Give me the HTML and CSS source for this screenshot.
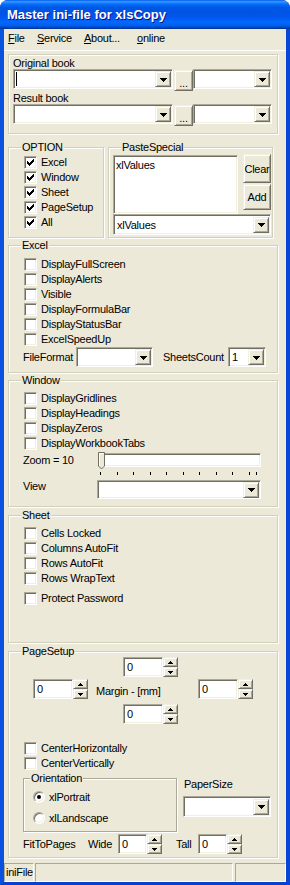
FILE: index.html
```html
<!DOCTYPE html>
<html>
<head>
<meta charset="utf-8">
<title>Master ini-file for xlsCopy</title>
<link rel="stylesheet" href="styles.css">
</head>
<body>
<div class="window">
  <div class="titlebar"><span class="title">Master ini-file for xlsCopy</span></div>
  <div class="frame">
    <div class="menubar">
      <span class="menu-item m-file"><u>F</u>ile</span>
      <span class="menu-item m-service"><u>S</u>ervice</span>
      <span class="menu-item m-about"><u>A</u>bout...</span>
      <span class="menu-item"><u>o</u>nline</span>
    </div>
    <div class="client">
      <div class="group group-books">
        <div class="field-label">Original book</div>
        <div class="book-row">
          <div class="combo combo-path"><span class="caret"></span><span class="drop"><svg width="7" height="4" viewBox="0 0 7 4" shape-rendering="crispEdges"><path d="M0 0h7v1h-7zM1 1h5v1h-5zM2 2h3v1h-3zM3 3h1v1h-1z"/></svg></span></div>
          <button class="btn btn-dots">...</button>
          <div class="combo combo-sheet"><span class="combo-text"></span><span class="drop"><svg width="7" height="4" viewBox="0 0 7 4" shape-rendering="crispEdges"><path d="M0 0h7v1h-7zM1 1h5v1h-5zM2 2h3v1h-3zM3 3h1v1h-1z"/></svg></span></div>
        </div>
        <div class="field-label">Result book</div>
        <div class="book-row">
          <div class="combo combo-path"><span class="combo-text"></span><span class="drop"><svg width="7" height="4" viewBox="0 0 7 4" shape-rendering="crispEdges"><path d="M0 0h7v1h-7zM1 1h5v1h-5zM2 2h3v1h-3zM3 3h1v1h-1z"/></svg></span></div>
          <button class="btn btn-dots">...</button>
          <div class="combo combo-sheet"><span class="combo-text"></span><span class="drop"><svg width="7" height="4" viewBox="0 0 7 4" shape-rendering="crispEdges"><path d="M0 0h7v1h-7zM1 1h5v1h-5zM2 2h3v1h-3zM3 3h1v1h-1z"/></svg></span></div>
        </div>
      </div>

      <div class="opt-row">
        <div class="group group-option">
          <span class="group-label">OPTION</span>
          <div class="chk-row"><span class="check"><svg width="7" height="7" viewBox="0 0 7 7" shape-rendering="crispEdges"><path d="M6 0h1v1h-1zM5 1h2v1h-2zM0 2h1v1h-1zM4 2h3v1h-3zM0 3h2v1h-2zM3 3h3v1h-3zM0 4h5v1h-5zM1 5h3v1h-3zM2 6h1v1h-1z"/></svg></span>Excel</div>
          <div class="chk-row"><span class="check"><svg width="7" height="7" viewBox="0 0 7 7" shape-rendering="crispEdges"><path d="M6 0h1v1h-1zM5 1h2v1h-2zM0 2h1v1h-1zM4 2h3v1h-3zM0 3h2v1h-2zM3 3h3v1h-3zM0 4h5v1h-5zM1 5h3v1h-3zM2 6h1v1h-1z"/></svg></span>Window</div>
          <div class="chk-row"><span class="check"><svg width="7" height="7" viewBox="0 0 7 7" shape-rendering="crispEdges"><path d="M6 0h1v1h-1zM5 1h2v1h-2zM0 2h1v1h-1zM4 2h3v1h-3zM0 3h2v1h-2zM3 3h3v1h-3zM0 4h5v1h-5zM1 5h3v1h-3zM2 6h1v1h-1z"/></svg></span>Sheet</div>
          <div class="chk-row"><span class="check"><svg width="7" height="7" viewBox="0 0 7 7" shape-rendering="crispEdges"><path d="M6 0h1v1h-1zM5 1h2v1h-2zM0 2h1v1h-1zM4 2h3v1h-3zM0 3h2v1h-2zM3 3h3v1h-3zM0 4h5v1h-5zM1 5h3v1h-3zM2 6h1v1h-1z"/></svg></span>PageSetup</div>
          <div class="chk-row"><span class="check"><svg width="7" height="7" viewBox="0 0 7 7" shape-rendering="crispEdges"><path d="M6 0h1v1h-1zM5 1h2v1h-2zM0 2h1v1h-1zM4 2h3v1h-3zM0 3h2v1h-2zM3 3h3v1h-3zM0 4h5v1h-5zM1 5h3v1h-3zM2 6h1v1h-1z"/></svg></span>All</div>
        </div>
        <div class="group group-paste">
          <span class="group-label">PasteSpecial</span>
          <div class="paste-top">
            <div class="listbox">xlValues</div>
            <div class="paste-buttons">
              <button class="btn btn-clear">Clear</button>
              <button class="btn btn-add">Add</button>
            </div>
          </div>
          <div class="combo combo-paste"><span class="combo-text">xlValues</span><span class="drop"><svg width="7" height="4" viewBox="0 0 7 4" shape-rendering="crispEdges"><path d="M0 0h7v1h-7zM1 1h5v1h-5zM2 2h3v1h-3zM3 3h1v1h-1z"/></svg></span></div>
        </div>
      </div>

      <div class="group group-excel">
        <span class="group-label">Excel</span>
        <div class="chk-row"><span class="check"></span>DisplayFullScreen</div>
        <div class="chk-row"><span class="check"></span>DisplayAlerts</div>
        <div class="chk-row"><span class="check"></span>Visible</div>
        <div class="chk-row"><span class="check"></span>DisplayFormulaBar</div>
        <div class="chk-row"><span class="check"></span>DisplayStatusBar</div>
        <div class="chk-row"><span class="check"></span>ExcelSpeedUp</div>
        <div class="ff-row">
          <span class="ff-label">FileFormat</span>
          <div class="combo combo-ff"><span class="combo-text"></span><span class="drop"><svg width="7" height="4" viewBox="0 0 7 4" shape-rendering="crispEdges"><path d="M0 0h7v1h-7zM1 1h5v1h-5zM2 2h3v1h-3zM3 3h1v1h-1z"/></svg></span></div>
          <span class="sc-label">SheetsCount</span>
          <div class="combo combo-sc"><span class="combo-text">1</span><span class="drop"><svg width="7" height="4" viewBox="0 0 7 4" shape-rendering="crispEdges"><path d="M0 0h7v1h-7zM1 1h5v1h-5zM2 2h3v1h-3zM3 3h1v1h-1z"/></svg></span></div>
        </div>
      </div>

      <div class="group group-window">
        <span class="group-label">Window</span>
        <div class="chk-row"><span class="check"></span>DisplayGridlines</div>
        <div class="chk-row"><span class="check"></span>DisplayHeadings</div>
        <div class="chk-row"><span class="check"></span>DisplayZeros</div>
        <div class="chk-row"><span class="check"></span>DisplayWorkbookTabs</div>
        <div class="zoom-row">
          <span class="zoom-label">Zoom = 10</span>
          <div class="slider">
            <div class="channel"></div>
            <svg class="thumb" width="7" height="18" viewBox="0 0 7 18"><path d="M0.5 0.5H6.5V14L3.5 17L0.5 14Z" fill="#ECE9D8" stroke="#716F64"/><path d="M1.5 14V1.5H5.5" fill="none" stroke="#fff"/></svg>
            <div class="ticks">
              <div class="tick-run"><i></i><i></i><i></i><i></i><i></i><i></i><i></i><i></i><i></i><i></i></div>
              <i class="tick-end"></i>
            </div>
          </div>
        </div>
        <div class="view-row">
          <span class="view-label">View</span>
          <div class="combo combo-view"><span class="combo-text"></span><span class="drop"><svg width="7" height="4" viewBox="0 0 7 4" shape-rendering="crispEdges"><path d="M0 0h7v1h-7zM1 1h5v1h-5zM2 2h3v1h-3zM3 3h1v1h-1z"/></svg></span></div>
        </div>
      </div>

      <div class="group group-sheet">
        <span class="group-label">Sheet</span>
        <div class="chk-row"><span class="check"></span>Cells Locked</div>
        <div class="chk-row"><span class="check"></span>Columns AutoFit</div>
        <div class="chk-row"><span class="check"></span>Rows AutoFit</div>
        <div class="chk-row"><span class="check"></span>Rows WrapText</div>
        <div class="chk-row chk-protect"><span class="check"></span>Protect Password</div>
      </div>

      <div class="group group-page">
        <span class="group-label">PageSetup</span>
        <div class="margin-row margin-center">
          <div class="spin"><span class="spin-text">0</span><span class="spin-btns"><span class="spin-btn"><svg width="5" height="3" viewBox="0 0 5 3" shape-rendering="crispEdges"><path d="M2 0h1v1h-1zM1 1h3v1h-3zM0 2h5v1h-5z"/></svg></span><span class="spin-btn"><svg width="5" height="3" viewBox="0 0 5 3" shape-rendering="crispEdges"><path d="M0 0h5v1h-5zM1 1h3v1h-3zM2 2h1v1h-1z"/></svg></span></span></div>
        </div>
        <div class="margin-row margin-mid">
          <div class="spin"><span class="spin-text">0</span><span class="spin-btns"><span class="spin-btn"><svg width="5" height="3" viewBox="0 0 5 3" shape-rendering="crispEdges"><path d="M2 0h1v1h-1zM1 1h3v1h-3zM0 2h5v1h-5z"/></svg></span><span class="spin-btn"><svg width="5" height="3" viewBox="0 0 5 3" shape-rendering="crispEdges"><path d="M0 0h5v1h-5zM1 1h3v1h-3zM2 2h1v1h-1z"/></svg></span></span></div>
          <span class="margin-label">Margin - [mm]</span>
          <div class="spin"><span class="spin-text">0</span><span class="spin-btns"><span class="spin-btn"><svg width="5" height="3" viewBox="0 0 5 3" shape-rendering="crispEdges"><path d="M2 0h1v1h-1zM1 1h3v1h-3zM0 2h5v1h-5z"/></svg></span><span class="spin-btn"><svg width="5" height="3" viewBox="0 0 5 3" shape-rendering="crispEdges"><path d="M0 0h5v1h-5zM1 1h3v1h-3zM2 2h1v1h-1z"/></svg></span></span></div>
        </div>
        <div class="margin-row margin-center margin-bottom">
          <div class="spin"><span class="spin-text">0</span><span class="spin-btns"><span class="spin-btn"><svg width="5" height="3" viewBox="0 0 5 3" shape-rendering="crispEdges"><path d="M2 0h1v1h-1zM1 1h3v1h-3zM0 2h5v1h-5z"/></svg></span><span class="spin-btn"><svg width="5" height="3" viewBox="0 0 5 3" shape-rendering="crispEdges"><path d="M0 0h5v1h-5zM1 1h3v1h-3zM2 2h1v1h-1z"/></svg></span></span></div>
        </div>
        <div class="page-checks">
          <div class="chk-row"><span class="check"></span>CenterHorizontally</div>
          <div class="chk-row"><span class="check"></span>CenterVertically</div>
        </div>
        <div class="orient-row">
          <div class="orient">
            <span class="orient-label">Orientation</span>
            <div class="radio-row"><span class="radio"><span class="dot"></span></span>xlPortrait</div>
            <div class="radio-row"><span class="radio"></span>xlLandscape</div>
          </div>
          <div class="paper">
            <div class="paper-label">PaperSize</div>
            <div class="combo combo-paper"><span class="combo-text"></span><span class="drop"><svg width="7" height="4" viewBox="0 0 7 4" shape-rendering="crispEdges"><path d="M0 0h7v1h-7zM1 1h5v1h-5zM2 2h3v1h-3zM3 3h1v1h-1z"/></svg></span></div>
          </div>
        </div>
        <div class="fit-row">
          <span class="fit-label">FitToPages</span>
          <span class="wide-label">Wide</span>
          <div class="spin spin-small"><span class="spin-text">0</span><span class="spin-btns"><span class="spin-btn"><svg width="5" height="3" viewBox="0 0 5 3" shape-rendering="crispEdges"><path d="M2 0h1v1h-1zM1 1h3v1h-3zM0 2h5v1h-5z"/></svg></span><span class="spin-btn"><svg width="5" height="3" viewBox="0 0 5 3" shape-rendering="crispEdges"><path d="M0 0h5v1h-5zM1 1h3v1h-3zM2 2h1v1h-1z"/></svg></span></span></div>
          <span class="tall-label">Tall</span>
          <div class="spin spin-small"><span class="spin-text">0</span><span class="spin-btns"><span class="spin-btn"><svg width="5" height="3" viewBox="0 0 5 3" shape-rendering="crispEdges"><path d="M2 0h1v1h-1zM1 1h3v1h-3zM0 2h5v1h-5z"/></svg></span><span class="spin-btn"><svg width="5" height="3" viewBox="0 0 5 3" shape-rendering="crispEdges"><path d="M0 0h5v1h-5zM1 1h3v1h-3zM2 2h1v1h-1z"/></svg></span></span></div>
        </div>
      </div>
    </div>
    <div class="statusbar">
      <span class="panel panel-1">iniFile</span>
      <span class="panel panel-2"></span>
      <span class="panel panel-3"></span>
    </div>
  </div>
</div>
</body>
</html>
```
FILE: styles.css
```css
* { box-sizing: border-box; }
html, body { margin: 0; padding: 0; background: #ffffff; }
body {
  font-family: "Liberation Sans", Arial, sans-serif;
  font-size: 11px;
  letter-spacing: -0.25px;
  color: #000;
}
.window {
  width: 290px;
  height: 885px;
  display: flex;
  flex-direction: column;
  border-radius: 8px 8px 0 0;
  overflow: hidden;
  background: #0A4FE0;
}
.titlebar {
  flex: none;
  height: 29px;
  padding: 2px 0 0 7px;
  background: linear-gradient(to bottom, #0058EE 0%, #3593FF 5%, #288EFF 8%, #127DFF 11%, #036FFC 15%, #0262EE 20%, #0057E5 26%, #0054E3 40%, #0055EB 56%, #005BF5 66%, #026AFE 76%, #0062EF 86%, #0052D6 92%, #0040AB 96%, #003092 100%);
}
.title {
  color: #fff;
  font-weight: bold;
  font-size: 13px;
  line-height: 25px;
  letter-spacing: 0;
  text-shadow: 1px 1px 0 #0F1089;
}
.frame {
  flex: 1;
  display: flex;
  flex-direction: column;
  background: #ECE9D8;
  border-left: 4px solid #0852DF;
  border-right: 4px solid #0846D8;
  border-bottom: 3px solid #0840D2;
}
.menubar {
  flex: none;
  height: 22px;
  display: flex;
  padding-left: 4px;
  line-height: 18px;
  border-bottom: 1px solid #fff;
}
.menu-item { display: inline-block; }
.m-file { width: 29px; }
.m-service { width: 47px; }
.m-about { width: 53px; }

.client {
  flex: 1;
  padding: 3px 8px 0 4px;
}

/* group boxes */
.group {
  position: relative;
  border: 1px solid #D0D0BF;
  box-shadow: inset 1px 1px 0 #fff, 1px 1px 0 #fff;
}
.group-label {
  position: absolute;
  top: -7px;
  left: 12px;
  padding: 0 1px;
  line-height: 12px;
  background: #ECE9D8;
}

/* generic controls */
.sunken, .combo, .listbox, .check, .spin-text, .channel {
  background: #fff;
  border: 1px solid;
  border-color: #ACA899 #fff #fff #ACA899;
  box-shadow: inset 1px 1px 0 #716F64, inset -1px -1px 0 #F1EFE2;
}
.btn, .drop, .spin-btn {
  background: #ECE9D8;
  border: 1px solid;
  border-color: #F1EFE2 #716F64 #716F64 #F1EFE2;
  box-shadow: inset 1px 1px 0 #fff, inset -1px -1px 0 #ACA899;
}
.btn {
  font: inherit;
  letter-spacing: inherit;
  color: #000;
  margin: 0;
  padding: 0;
  text-align: center;
}
.combo {
  height: 20px;
  display: flex;
  align-items: center;
  justify-content: space-between;
  padding: 1px;
}
.combo-text {
  flex: 1;
  padding-left: 2px;
  line-height: 16px;
}
.drop {
  flex: none;
  width: 16px;
  height: 16px;
  display: flex;
  align-items: center;
  justify-content: center;
  padding-top: 1px;
}
.caret {
  width: 1px;
  height: 14px;
  margin-left: 1px;
  background: #000;
}
.check {
  flex: none;
  width: 13px;
  height: 13px;
  margin-right: 4px;
  display: flex;
  align-items: center;
  justify-content: center;
}
.chk-row {
  display: flex;
  align-items: center;
  height: 15px;
  line-height: 15px;
}

/* books */
.group-books {
  height: 80px;
  padding: 2px 0 0 4px;
}
.field-label { line-height: 12px; }
.book-row {
  display: flex;
  height: 20px;
  margin-bottom: 3px;
}
.combo-path { width: 160px; }
.btn-dots {
  width: 19px;
  height: 21px;
  margin: 1px 0 0 1px;
  padding-top: 4px;
}
.combo-sheet { width: 79px; }

/* option / paste */
.opt-row {
  display: flex;
  gap: 4px;
  margin-top: 13px;
  height: 91px;
}
.group-option {
  width: 96px;
  padding: 7px 0 0 15px;
}
.group-paste {
  width: 165px;
  padding: 6px 0 0 4px;
}
.paste-top { display: flex; }
.listbox {
  width: 125px;
  height: 59px;
  margin-top: 1px;
  padding: 3px 2px;
  line-height: 12px;
}
.paste-buttons {
  display: flex;
  flex-direction: column;
  margin-left: 5px;
}
.btn-clear { width: 28px; height: 29px; }
.btn-add { width: 28px; height: 26px; margin-top: 1px; }
.combo-paste { width: 158px; height: 21px; }

/* excel */
.group-excel {
  margin-top: 7px;
  height: 128px;
  padding: 11px 0 0 15px;
}
.ff-row {
  display: flex;
  align-items: center;
  margin-left: -1px;
  height: 20px;
}
.ff-label { width: 53px; }
.combo-ff { width: 77px; }
.sc-label { width: 65px; margin-left: 10px; }
.combo-sc { width: 38px; }

/* window */
.group-window {
  margin-top: 7px;
  height: 127px;
  padding: 10px 0 0 15px;
}
.zoom-row {
  display: flex;
  margin: 2px 0 0 -1px;
}
.zoom-label {
  width: 75px;
  line-height: 14px;
}
.slider {
  position: relative;
  width: 163px;
}
.channel { height: 14px; }
.thumb {
  position: absolute;
  left: 0;
  top: -1px;
}
.ticks {
  display: flex;
  height: 3px;
  margin-top: 5px;
  padding-left: 2px;
}
.tick-run {
  width: 150px;
  display: flex;
  justify-content: space-between;
}
.ticks i {
  display: block;
  width: 1px;
  height: 3px;
  background: #000;
}
.ticks .tick-end { margin-left: 6px; }
.view-row {
  display: flex;
  margin: 5px 0 0 -1px;
}
.view-label {
  width: 74px;
  line-height: 12px;
}
.combo-view { width: 164px; height: 19px; }

/* sheet */
.group-sheet {
  margin-top: 8px;
  height: 128px;
  padding: 10px 0 0 15px;
}
.chk-protect { margin-top: 5px; }

/* page setup */
.group-page {
  margin-top: 8px;
  height: 207px;
  padding: 5px 0 0 0;
}
.margin-row {
  display: flex;
  align-items: center;
  height: 20px;
}
.margin-center { margin-left: 114px; }
.margin-mid { margin: 2px 0 0 24px; }
.margin-bottom { margin-top: 5px; }
.margin-label {
  width: 102px;
  margin-left: 8px;
  padding-top: 3px;
}
.spin {
  display: flex;
  height: 20px;
}
.spin-text {
  width: 40px;
  height: 20px;
  padding: 3px 0 0 3px;
  line-height: 13px;
}
.spin-btns {
  display: flex;
  flex-direction: column;
  width: 15px;
}
.spin-btn {
  height: 10px;
  display: flex;
  align-items: center;
  justify-content: center;
}
.spin-small .spin-text { width: 29px; }
.page-checks {
  margin: 17px 0 0 15px;
}
.orient-row {
  display: flex;
  margin: 7px 0 0 14px;
}
.orient {
  position: relative;
  width: 154px;
  height: 54px;
  padding: 11px 0 0 9px;
  border: 1px solid #ACA899;
  box-shadow: inset 1px 1px 0 #fff, 1px 1px 0 #fff;
}
.orient-label {
  position: absolute;
  top: -7px;
  left: 6px;
  padding: 0 1px;
  line-height: 12px;
  background: #ECE9D8;
}
.radio-row {
  display: flex;
  align-items: center;
  height: 13px;
  margin-bottom: 8px;
}
.radio {
  width: 12px;
  height: 12px;
  margin-right: 4px;
  border-radius: 50%;
  background: #fff;
  border: 1px solid;
  border-color: #ACA899 #fff #fff #ACA899;
  box-shadow: inset 1px 1px 0 #716F64, inset -1px -1px 0 #F1EFE2;
  display: flex;
  align-items: center;
  justify-content: center;
}
.dot {
  width: 4px;
  height: 4px;
  border-radius: 50%;
  background: #000;
}
.paper { margin-left: 6px; }
.paper-label {
  line-height: 12px;
  padding-left: 1px;
}
.combo-paper {
  width: 88px;
  height: 21px;
  margin-top: 6px;
}
.fit-row {
  display: flex;
  align-items: center;
  margin: 2px 0 0 14px;
  height: 20px;
}
.fit-label { width: 65px; }
.wide-label { width: 30px; }
.tall-label { width: 22px; margin-left: 14px; }

/* status bar */
.statusbar {
  flex: none;
  height: 20px;
  display: flex;
  padding-top: 1px;
}
.panel {
  height: 19px;
  border: 1px solid;
  border-color: #ACA899 #fff #fff #ACA899;
  line-height: 17px;
  padding-left: 1px;
}
.panel-1 { width: 30px; }
.panel-2 { width: 198px; margin-left: 1px; }
.panel-3 { flex: 1; margin-left: 2px; }
```
